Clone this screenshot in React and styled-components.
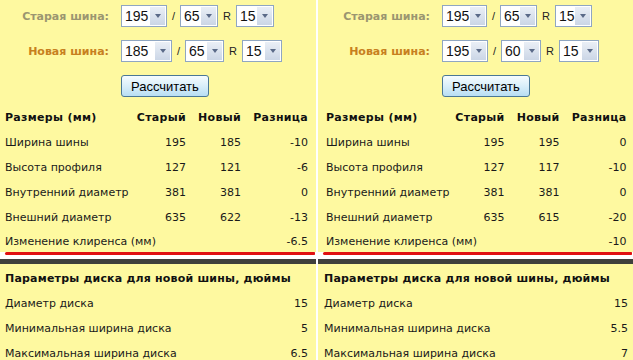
import styled, { createGlobalStyle } from "styled-components";

const GlobalStyle = createGlobalStyle`
  html, body {
    margin: 0;
    padding: 0;
    background: #ffffff;
  }
  body {
    font-family: "DejaVu Sans", Verdana, sans-serif;
    font-size: 11px;
    color: #1a1a1a;
  }
`;

const panels = [
  {
    id: "left",
    pad: [5, 8],
    discPad: [5, 8],
    oldTyre: [
      { v: "195", w: 46 },
      { v: "65", w: 38 },
      { v: "15", w: 38 },
    ],
    newTyre: [
      { v: "185", w: 51 },
      { v: "65", w: 39 },
      { v: "15", w: 40 },
    ],
    rows: [
      ["Ширина шины", "195", "185", "-10"],
      ["Высота профиля", "127", "121", "-6"],
      ["Внутренний диаметр", "381", "381", "0"],
      ["Внешний диаметр", "635", "622", "-13"],
    ],
    clearance: "-6.5",
    disc: [
      ["Диаметр диска", "15"],
      ["Минимальная ширина диска", "5"],
      ["Максимальная ширина диска", "6.5"],
    ],
  },
  {
    id: "right",
    pad: [8, 10],
    discPad: [6, 5],
    oldTyre: [
      { v: "195", w: 45 },
      { v: "65", w: 37 },
      { v: "15", w: 37 },
    ],
    newTyre: [
      { v: "195", w: 46 },
      { v: "60", w: 40 },
      { v: "15", w: 40 },
    ],
    rows: [
      ["Ширина шины", "195", "195", "0"],
      ["Высота профиля", "127", "117", "-10"],
      ["Внутренний диаметр", "381", "381", "0"],
      ["Внешний диаметр", "635", "615", "-20"],
    ],
    clearance: "-10",
    disc: [
      ["Диаметр диска", "15"],
      ["Минимальная ширина диска", "5.5"],
      ["Максимальная ширина диска", "7"],
    ],
  },
];

const options = {
  0: ["135", "145", "155", "165", "175", "185", "195", "205", "215", "225"],
  1: ["50", "55", "60", "65", "70", "75", "80"],
  2: ["13", "14", "15", "16", "17", "18"],
};

const TyreSelect = ({ index, value, width }) => (
  <Combo $w={width}>
    <ComboSelect defaultValue={value}>
      {options[index].map((o) => (
        <option key={o} value={o}>
          {o}
        </option>
      ))}
    </ComboSelect>
    <ComboArrow />
  </Combo>
);

const TyreRow = ({ label, tone, values }) => (
  <FormRow>
    <FormLabel $tone={tone}>{label}</FormLabel>
    <Controls>
      <TyreSelect index={0} value={values[0].v} width={values[0].w} />
      <Sep>/</Sep>
      <TyreSelect index={1} value={values[1].v} width={values[1].w} />
      <Sep>R</Sep>
      <TyreSelect index={2} value={values[2].v} width={values[2].w} />
    </Controls>
  </FormRow>
);

const TyrePanel = ({ panel }) => (
  <Panel>
    <TopBlock>
      <Form $shift={panel.pad[0] - 5}>
        <TyreRow label="Старая шина:" tone="old" values={panel.oldTyre} />
        <TyreRow label="Новая шина:" tone="new" values={panel.newTyre} />
        <FormRow>
          <span />
          <CalcButton type="button">Рассчитать</CalcButton>
        </FormRow>
      </Form>

      {/* size comparison */}
      <SizeTable $pad={panel.pad}>
        <HeadCell>Размеры (мм)</HeadCell>
        <HeadCell $num>Старый</HeadCell>
        <HeadCell $num>Новый</HeadCell>
        <HeadCell $num>Разница</HeadCell>
        {panel.rows.map((r) => (
          <Row key={r[0]}>
            <Cell>{r[0]}</Cell>
            <Cell $num>{r[1]}</Cell>
            <Cell $num>{r[2]}</Cell>
            <Cell $num>{r[3]}</Cell>
          </Row>
        ))}
        <Cell $span={3}>Изменение клиренса (мм)</Cell>
        <Cell $num>{panel.clearance}</Cell>
      </SizeTable>
    </TopBlock>
    <RedRule />
    <DarkBar />

    {/* disc params */}
    <DiscBlock $pad={panel.discPad}>
      <DiscHead>Параметры диска для новой шины, дюймы</DiscHead>
      {panel.disc.map((d) => (
        <Row key={d[0]}>
          <Cell>{d[0]}</Cell>
          <Cell $num>{d[1]}</Cell>
        </Row>
      ))}
    </DiscBlock>
  </Panel>
);

const App = () => (
  <>
    <GlobalStyle />
    <Page>
      {panels.map((p) => (
        <TyrePanel key={p.id} panel={p} />
      ))}
    </Page>
  </>
);

const Page = styled.div`
  display: grid;
  grid-template-columns: 316px 315px;
  column-gap: 2px;
  width: 633px;
  height: 360px;
  overflow: hidden;
`;

const Panel = styled.section`
  display: flex;
  flex-direction: column;
`;

const TopBlock = styled.div`
  background: #fef9a0;
  padding-top: 5px;
`;

const Form = styled.div`
  display: flex;
  flex-direction: column;
  gap: 13px;
  padding-left: ${(p) => p.$shift}px;
`;

const FormRow = styled.div`
  display: grid;
  grid-template-columns: 109px auto;
  column-gap: 12px;
  align-items: center;
  justify-items: start;
  height: 22px;
`;

const FormLabel = styled.span`
  justify-self: end;
  font-weight: bold;
  font-size: 11px;
  color: ${(p) => (p.$tone === "new" ? "#c7801f" : "#9b9670")};
`;

const Controls = styled.div`
  display: flex;
  align-items: center;
  gap: 5px;
`;

const Sep = styled.span`
  font: 11px "Liberation Sans", Arial, sans-serif;
  color: #222;
`;

const Combo = styled.label`
  position: relative;
  display: inline-flex;
  width: ${(p) => p.$w}px;
  height: 22px;
`;

const ComboSelect = styled.select`
  appearance: none;
  width: 100%;
  height: 100%;
  margin: 0;
  padding: 0 0 0 3px;
  border: 1px solid #8fa6c2;
  border-radius: 0;
  background: #ffffff;
  font: 14px "Liberation Sans", Arial, sans-serif;
  color: #111;
  outline: none;
`;

const ComboArrow = styled.span`
  position: absolute;
  top: 2px;
  right: 2px;
  bottom: 2px;
  width: 15px;
  display: flex;
  align-items: center;
  justify-content: center;
  background: linear-gradient(#eaeff6, #cbd6e6);
  pointer-events: none;

  &::after {
    content: "";
    border-left: 3.5px solid transparent;
    border-right: 3.5px solid transparent;
    border-top: 4px solid #5a6a88;
  }
`;

const CalcButton = styled.button`
  height: 22px;
  padding: 0 9px;
  border: 1px solid #4a7896;
  border-radius: 3px;
  background: linear-gradient(#f6fcff, #d6edf9 55%, #b8def3);
  font: 13px "Liberation Sans", Arial, sans-serif;
  color: #000;
  cursor: pointer;
`;

const SizeTable = styled.div`
  display: grid;
  grid-template-columns: 1fr 55px 55px 67px;
  grid-template-rows: repeat(5, 25px) 22px;
  align-items: center;
  margin-top: 8px;
  padding: 0 ${(p) => p.$pad[1]}px 0 ${(p) => p.$pad[0]}px;
`;

const Row = styled.div`
  display: contents;
`;

const Cell = styled.span`
  grid-column: ${(p) => (p.$span ? `span ${p.$span}` : "auto")};
  text-align: ${(p) => (p.$num ? "right" : "left")};
  white-space: nowrap;
`;

const HeadCell = styled(Cell)`
  font-weight: bold;
  letter-spacing: 0.3px;
  color: #111;
`;

const RedRule = styled.div`
  height: 3px;
  margin: 0 1px 0 5px;
  border-radius: 2px 1px 1px 2px;
  background: #e01010;
`;

const DarkBar = styled.div`
  height: 5px;
  margin-top: 4px;
  background: #3f403c;
`;

const DiscBlock = styled.div`
  flex: 1;
  display: grid;
  grid-template-columns: 1fr auto;
  grid-auto-rows: 25px;
  align-items: center;
  padding: 2px ${(p) => p.$pad[1]}px 0 ${(p) => p.$pad[0]}px;
  background: #fef9a0;
`;

const DiscHead = styled.span`
  grid-column: span 2;
  font-weight: bold;
  letter-spacing: 0.2px;
  color: #111;
`;

export default App;
